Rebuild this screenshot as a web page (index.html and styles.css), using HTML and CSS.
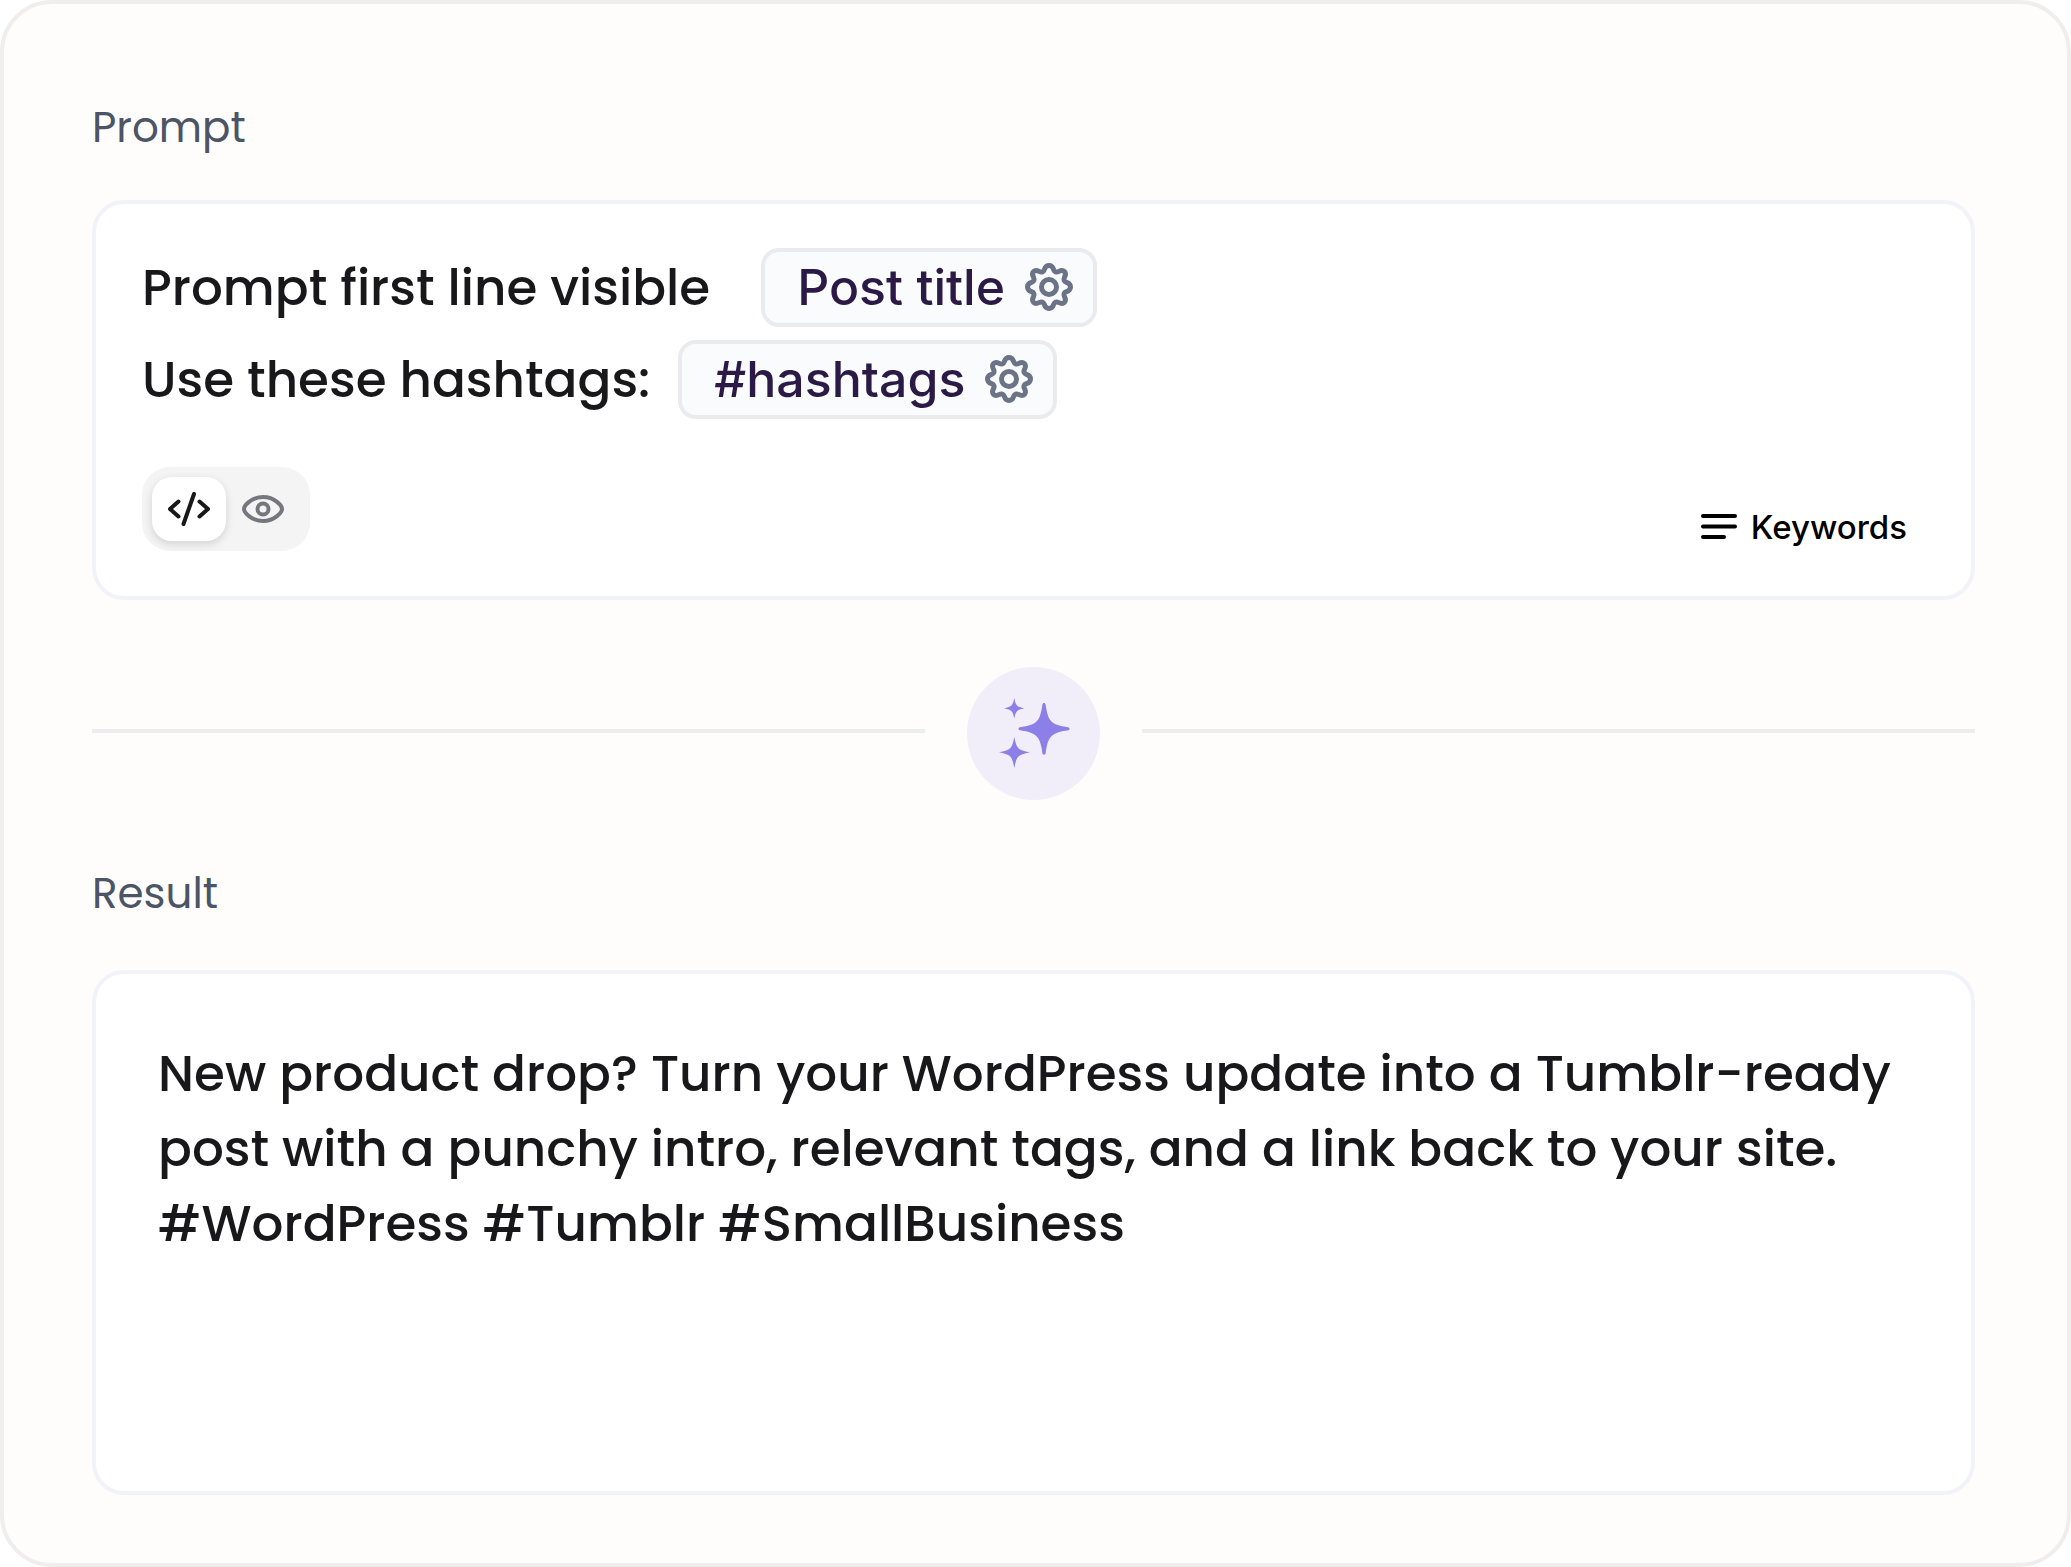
FILE: index.html
```html
<!DOCTYPE html>
<html lang="en">
<head>
  <meta charset="UTF-8">
  <meta name="viewport" content="width=device-width, initial-scale=1">
  <title>Prompt</title>
  <link rel="stylesheet" href="styles.css">
</head>
<body>

  <!-- Gear icon shared by the tags -->
  <svg class="sprite" aria-hidden="true">
    <symbol id="gear" viewBox="0 0 48 48">
      <path d="M24 2.500C27.500 2.500 28 4.500 28.700 6.700C29.500 9 31.500 9.600 33.500 8.600C35.500 7.500 37.300 6.500 39.400 8.600C41.500 10.700 40.500 12.500 39.400 14.500C38.400 16.500 39 18.500 41.300 19.300C43.500 20 45.500 20.500 45.500 24C45.500 27.500 43.500 28 41.300 28.700C39 29.500 38.400 31.500 39.400 33.500C40.500 35.500 41.500 37.300 39.400 39.400C37.300 41.500 35.500 40.500 33.500 39.400C31.500 38.400 29.500 39 28.700 41.300C28 43.500 27.500 45.500 24 45.500C20.500 45.500 20 43.500 19.300 41.300C18.500 39 16.500 38.400 14.500 39.400C12.500 40.500 10.700 41.500 8.600 39.400C6.500 37.300 7.500 35.500 8.600 33.500C9.600 31.500 9 29.500 6.700 28.700C4.500 28 2.500 27.500 2.500 24C2.500 20.500 4.500 20 6.700 19.300C9 18.500 9.600 16.500 8.600 14.500C7.500 12.500 6.500 10.700 8.600 8.600C10.700 6.500 12.500 7.500 14.500 8.600C16.500 9.600 18.500 9 19.300 6.700C20 4.500 20.500 2.500 24 2.500Z"/>
      <circle cx="24" cy="24" r="7.500"/>
    </symbol>
  </svg>

  <main class="panel">
    <h2 class="label">Prompt</h2>
    <section class="card prompt-card">
      <div class="prompt-line">
        <span>Prompt first line visible</span>
        <span class="tag tag-spaced">Post title
          <button class="tag-settings" aria-label="Post title settings"><svg><use href="#gear"/></svg></button>
        </span>
      </div>
      <div class="prompt-line">
        <span>Use these hashtags:</span>
        <span class="tag">#hashtags
          <button class="tag-settings" aria-label="Hashtags settings"><svg><use href="#gear"/></svg></button>
        </span>
      </div>

      <div class="prompt-footer">
        <div class="view-toggle">
          <button class="toggle-btn active" aria-label="Code" aria-pressed="true">
            <svg viewBox="0 0 42 34">
              <path d="M10.500 9.500L2 17L10.500 24.500M31.500 9.500L40 17L31.500 24.500M26 2L15.500 32"/>
            </svg>
          </button>
          <button class="toggle-btn" aria-label="Preview" aria-pressed="false">
            <svg viewBox="0 0 42 34">
              <path d="M2 17C2 14 9 5 21 5C33 5 40 14 40 17C40 20 33 29 21 29C9 29 2 20 2 17Z"/>
              <circle cx="21" cy="17" r="5.500"/>
            </svg>
          </button>
        </div>
        <button class="keywords">
          <svg viewBox="0 0 36 28"><path d="M2 3H34M2 13.500H34M2 24H23"/></svg>
          Keywords
        </button>
      </div>
    </section>

    <div class="divider">
      <button class="generate" aria-label="Generate">
        <svg viewBox="0 0 72 72">
          <path d="M46 5C48 5 47.500 7 48.500 12C50.500 22.500 54 26 64 28.200C69 29.200 71.500 28.700 71.500 30.700C71.500 32.700 69 32.200 64 33.200C54 35.700 50.500 39.200 48.500 49.500C47.500 54.500 48 56.700 46 56.700C44 56.700 44.500 54.500 43.500 49.500C41.500 39.200 38 35.700 28 33.200C23 32.200 20.500 32.700 20.500 30.700C20.500 28.700 23 29.200 28 28.200C38 26 41.500 22.500 43.500 12C44.500 7 44 5 46 5Z"/>
          <path d="M16.300 0C18 8 18.500 8.500 26.500 10.300C18.500 12.200 18 12.700 16.300 20.500C14.500 12.700 14 12.200 6 10.300C14 8.500 14.500 8 16.300 0Z"/>
          <path d="M16.300 39C18.800 51 19.500 51.700 32 54.300C19.500 57 18.800 57.700 16.300 70C13.800 57.700 13 57 1 54.300C13 51.700 13.800 51 16.300 39Z"/>
        </svg>
      </button>
    </div>

    <h2 class="label result-label">Result</h2>
    <section class="card result-card">
      <p>New product drop? Turn your WordPress update into a Tumblr-ready<br>
        post with a punchy intro, relevant tags, and a link back to your site.<br>
        #WordPress #Tumblr #SmallBusiness</p>
    </section>
  </main>

</body>
</html>
```
FILE: styles.css
```css
* {
  box-sizing: border-box;
}

body {
  margin: 0;
  background: #fff;
  color: #18181a;
  font-family: Poppins, Inter, sans-serif;
  font-size: 50px;
  font-weight: 500;
}

button {
  padding: 0;
  border: none;
  background: none;
  color: inherit;
  font: inherit;
  cursor: pointer;
}

svg {
  display: block;
  fill: none;
  stroke: currentColor;
  stroke-linecap: round;
  stroke-linejoin: round;
}

.sprite {
  position: absolute;
  width: 0;
  height: 0;
}

.panel {
  display: flex;
  flex-direction: column;
  min-height: 100vh;
  padding: 96px 92px 68px 88px;
  background: #fefdfc;
  border: 4px solid #efeeed;
  border-radius: 52px;
}

.label {
  margin: 0 0 44px;
  color: #4b5565;
  font-size: 42px;
  font-weight: 400;
  line-height: 56px;
}

.card {
  background: #fff;
  border: 4px solid #f1f3f8;
  border-radius: 32px;
}

/* Prompt */
.prompt-card {
  display: flex;
  flex-direction: column;
  gap: 13px;
  padding: 44px 46px 45px;
}

.prompt-line {
  display: flex;
  align-items: center;
  gap: 28px;
  height: 79px;
  white-space: nowrap;
}

.tag {
  display: flex;
  align-items: center;
  gap: 20px;
  height: 79px;
  padding: 0 20px 2px 32px;
  background: #fafbfd;
  border: 4px solid #eaebef;
  border-radius: 18px;
  color: #2a1a45;
  font-family: Inter, sans-serif;
}

.tag-spaced {
  margin-left: 23px;
}

.tag-settings {
  color: #6b7486;
}

.tag-settings svg {
  width: 48px;
  height: 48px;
  stroke-width: 5;
}

.prompt-footer {
  display: flex;
  justify-content: space-between;
  align-items: flex-end;
  margin-top: 35px;
}

.view-toggle {
  display: flex;
  height: 84px;
  padding: 10px;
  background: #f4f4f5;
  border-radius: 28px;
}

.toggle-btn {
  display: flex;
  justify-content: center;
  align-items: center;
  width: 74px;
  height: 64px;
  border-radius: 20px;
  color: #76767f;
}

.toggle-btn svg {
  width: 42px;
  height: 34px;
  stroke-width: 4;
}

.toggle-btn.active {
  background: #fff;
  box-shadow: 0 3px 8px rgba(0, 0, 0, 0.14);
  color: #18181a;
}

.keywords {
  display: flex;
  align-items: center;
  gap: 14px;
  height: 48px;
  margin-right: 18px;
  color: #000;
  font-family: Inter, sans-serif;
  font-size: 33px;
}

.keywords svg {
  width: 36px;
  height: 28px;
  stroke-width: 4;
}

/* Divider */
.divider {
  display: flex;
  align-items: center;
  gap: 42px;
  margin: 67px 0 66px;
}

.divider::before,
.divider::after {
  content: "";
  flex: 1;
  height: 4px;
  margin-bottom: 6px;
  background: #ebedef;
}

.generate {
  display: flex;
  justify-content: center;
  align-items: center;
  width: 133px;
  height: 133px;
  background: #f1eef9;
  border-radius: 50%;
  color: #8d7fe8;
}

.generate svg {
  width: 72px;
  height: 72px;
  fill: currentColor;
  stroke: none;
}

/* Result */
.result-label {
  margin-bottom: 48px;
}

.result-card {
  flex: 1;
  padding: 62px;
}

.result-card p {
  margin: 0;
  line-height: 75px;
}
```
